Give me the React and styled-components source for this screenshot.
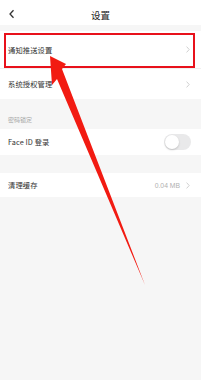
import styled, { createGlobalStyle } from "styled-components";

const GlobalStyle = createGlobalStyle`
  html, body {
    margin: 0;
    padding: 0;
    background: #ffffff;
  }
  body {
    font-family: "Noto Sans CJK SC", "Noto Sans", sans-serif;
  }
`;

const Page = styled.div`
  position: relative;
  width: 201px;
  height: 380px;
  background: #f6f6f6;
  overflow: hidden;
`;

const Header = styled.div`
  height: 25px;
  background: #ffffff;
  display: flex;
  align-items: center;
  justify-content: center;
  position: relative;
`;

const BackButton = styled.div`
  position: absolute;
  left: 8px;
  top: 9px;
  width: 8px;
  height: 10px;
  display: flex;
`;

const Title = styled.div`
  font-size: 9.5px;
  color: #222;
  margin-top: 4px;
`;

const Group = styled.div`
  margin-top: ${(p) => p.$gap}px;
  background: #ffffff;
  display: flex;
  flex-direction: column;
`;

const Row = styled.div`
  position: relative;
  height: ${(p) => p.$h}px;
  display: flex;
  align-items: center;
  padding: 0 11px 0 8px;
  border-bottom: ${(p) => (p.$divider ? "1px solid #f0f0f0" : "none")};

  ${(p) =>
    p.$highlight &&
    `
    &::after {
      content: "";
      position: absolute;
      top: 2px;
      left: 4px;
      right: 6px;
      bottom: 0px;
      border: 2px solid #e8111b;
    }
  `}
`;

const Label = styled.div`
  flex: 1;
  font-size: 7.3px;
  color: #333;
  letter-spacing: 0.1px;
`;

const Value = styled.div`
  font-size: 6.8px;
  color: #b0b0b0;
  margin-right: 6px;
  font-family: "Liberation Sans", "Noto Sans CJK SC", sans-serif;
`;

const SectionTitle = styled.div`
  height: 30px;
  display: flex;
  align-items: flex-end;
  padding: 0 8px 5px;
  box-sizing: border-box;
  font-size: 6px;
  color: #a8a8a8;
  margin-top: 0;
`;

const Toggle = styled.div`
  width: 27px;
  height: 16px;
  border-radius: 8px;
  background: #e9e9ea;
  position: relative;
  margin-right: -1px;

  &::before {
    content: "";
    position: absolute;
    top: 1px;
    left: 1px;
    width: 14px;
    height: 14px;
    border-radius: 50%;
    background: #ffffff;
    box-shadow: 0 1px 2px rgba(0, 0, 0, 0.18);
  }
`;

const Chevron = () => (
  <svg width="4" height="7" viewBox="0 0 4 7">
    <path d="M0.6 0.6 L3.2 3.5 L0.6 6.4" fill="none" stroke="#c4c4c4" strokeWidth="0.8" />
  </svg>
);

const Arrow = styled.svg`
  position: absolute;
  left: 0;
  top: 0;
  pointer-events: none;
`;

export default function App() {
  return (
    <>
      <GlobalStyle />
      <Page>
        <Header>
          <BackButton>
            <svg width="8" height="10" viewBox="0 0 8 10">
              <path d="M5.5 1.2 L2 5 L5.5 8.8" fill="none" stroke="#333" strokeWidth="1.3" />
            </svg>
          </BackButton>
          <Title>设置</Title>
        </Header>

        <Group $gap={6}>
          <Row $h={37} $divider $highlight>
            <Label>通知推送设置</Label>
            <Chevron />
          </Row>
          <Row $h={30}>
            <Label>系统授权管理</Label>
            <Chevron />
          </Row>
        </Group>

        <SectionTitle>密码锁定</SectionTitle>

        <Group $gap={0}>
          <Row $h={26}>
            <Label>Face ID 登录</Label>
            <Toggle />
          </Row>
        </Group>

        <Group $gap={18}>
          <Row $h={24}>
            <Label>清理缓存</Label>
            <Value>0.04 MB</Value>
            <Chevron />
          </Row>
        </Group>

        <Arrow width="201" height="380" viewBox="0 0 201 380">
          <polygon
            points="50,56 66,64 62,69 145,285 57,79 52,85"
            fill="#f21b12"
          />
        </Arrow>
      </Page>
    </>
  );
}
